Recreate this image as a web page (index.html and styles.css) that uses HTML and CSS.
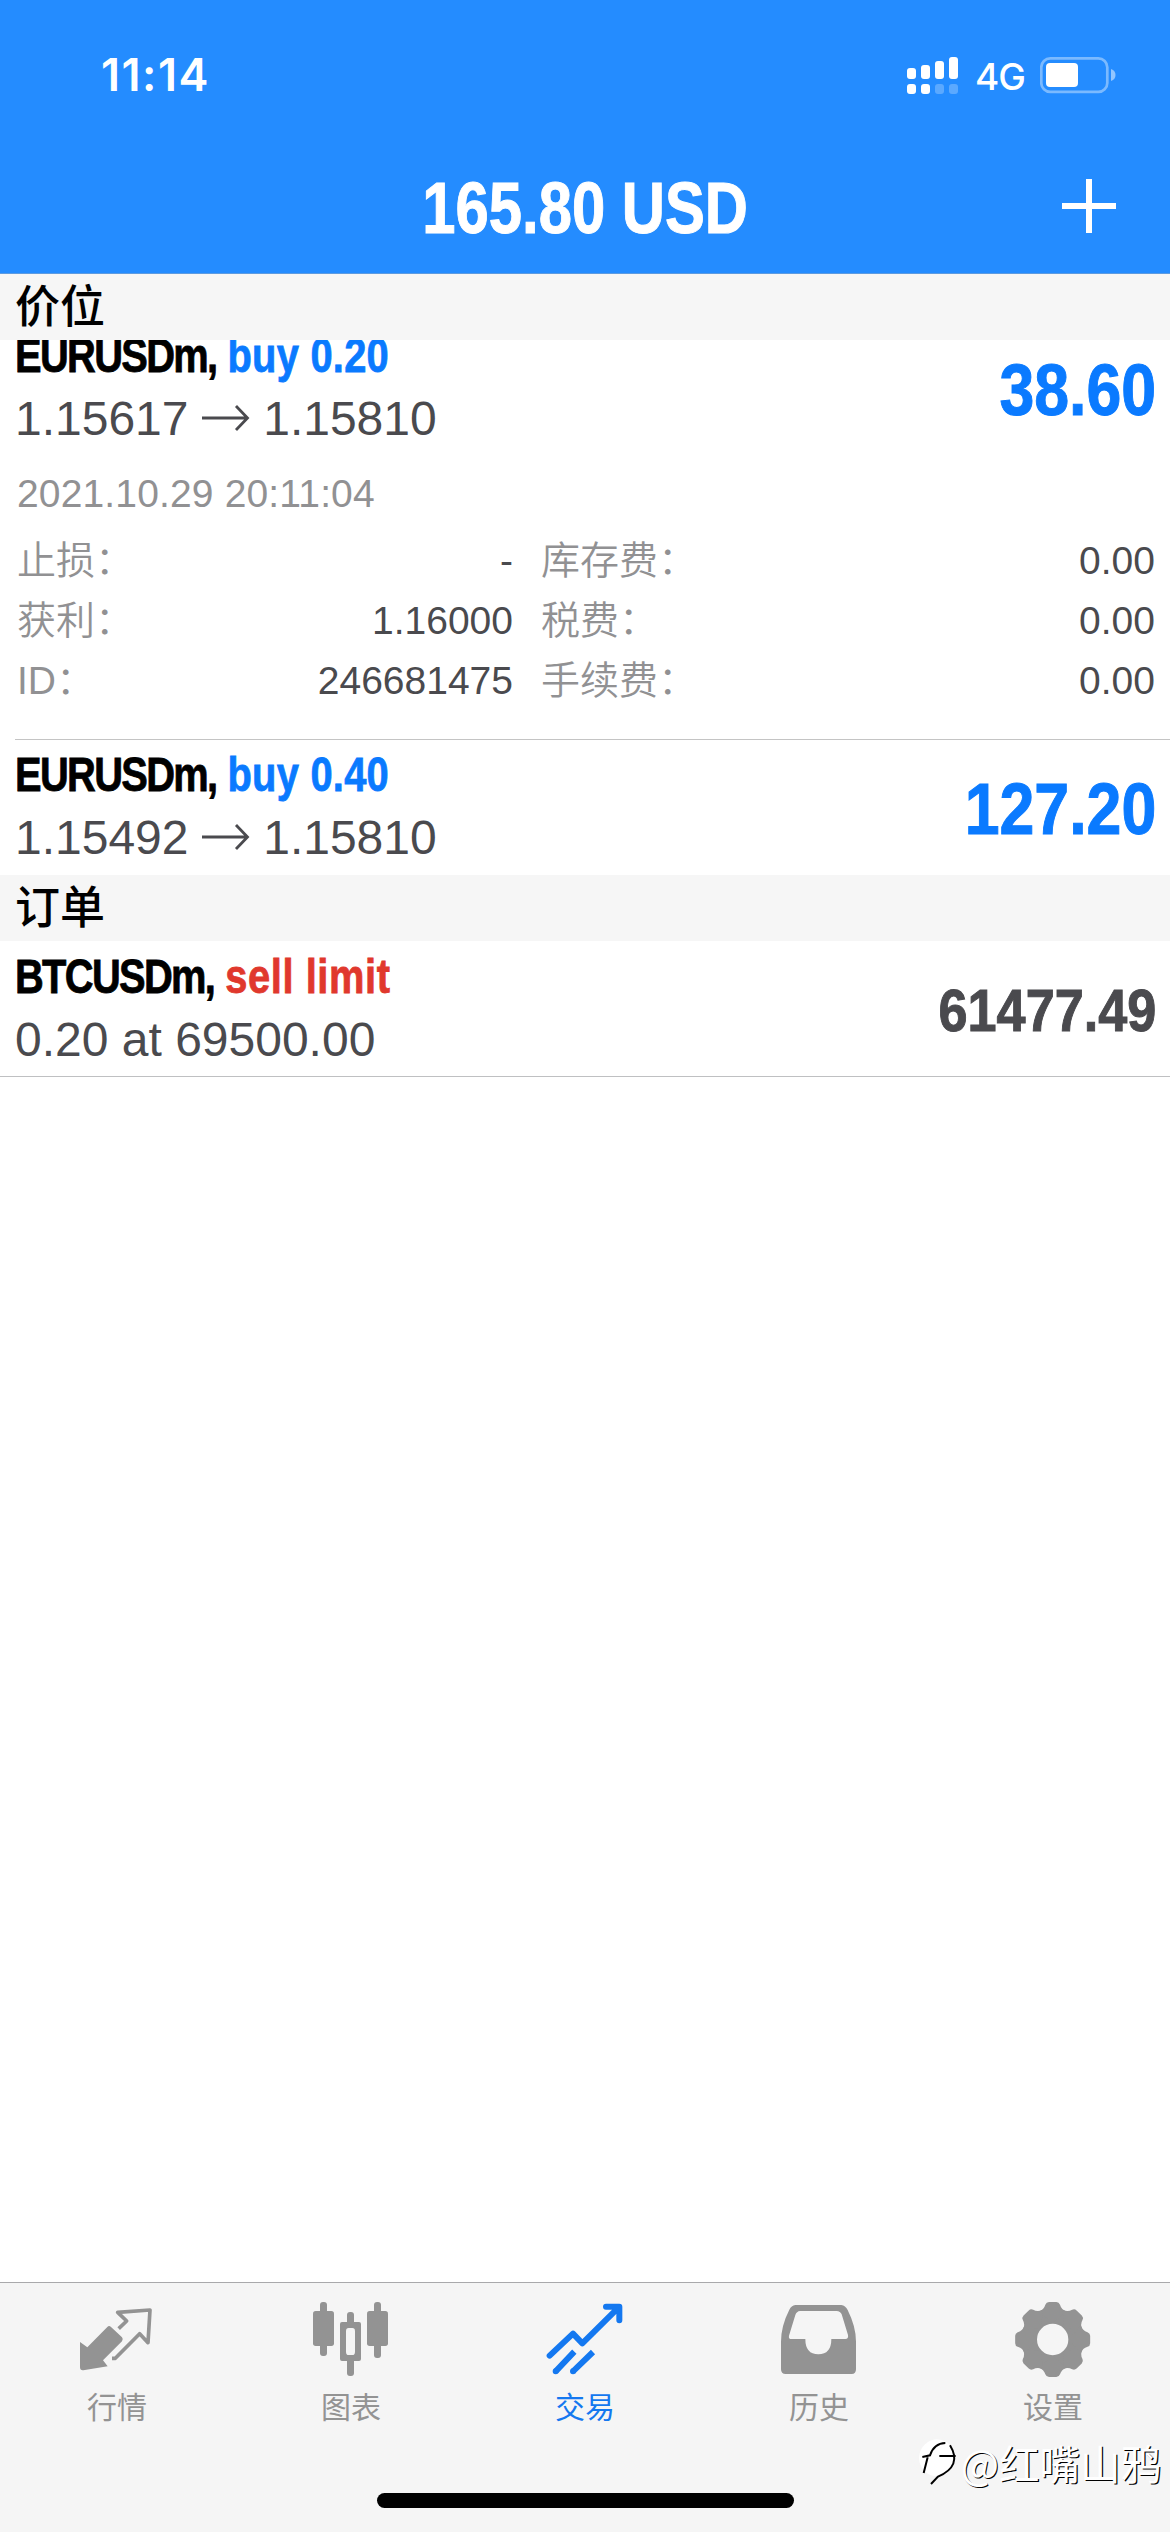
FILE: index.html
```html
<!DOCTYPE html>
<html lang="zh-CN">
<head>
<meta charset="utf-8">
<title>交易</title>
<link rel="stylesheet" href="styles.css">
</head>
<body>
<div class="app">
  <header class="header">
    <div class="status">
      <span class="clock">11:14</span>
      <svg class="status-icons" width="52" height="38" viewBox="906 55 52 38" fill="#fff">
        <rect x="907" y="67" width="9" height="11" rx="3"/><rect x="921" y="64" width="9" height="14" rx="3"/><rect x="935" y="60" width="9" height="18" rx="3"/><rect x="949" y="56" width="9" height="22" rx="3"/>
        <rect x="907" y="83" width="9" height="10" rx="3"/><rect x="921" y="83" width="9" height="10" rx="3"/>
        <g opacity=".25"><rect x="935" y="83" width="9" height="10" rx="3"/><rect x="949" y="83" width="9" height="10" rx="3"/></g>
      </svg>
      <span class="network">4G</span>
      <svg class="battery" width="76" height="38" viewBox="1040 55 76 38">
        <rect x="1041.3" y="57.3" width="66" height="33.6" rx="9" fill="none" stroke="#fff" stroke-opacity=".4" stroke-width="2.7"/>
        <rect x="1046" y="62" width="32" height="24" rx="4" fill="#fff"/>
        <path d="M1111 68q4.500 1.500 4.500 6t-4.500 6z" fill="#fff" fill-opacity=".5"/>
      </svg>
    </div>
    <div class="navbar">
      <h1 class="balance">165.80 USD</h1>
      <svg class="add" width="54" height="54" viewBox="0 0 54 54"><path d="M27 0V54M0 27H54" stroke="#fff" stroke-width="6"/></svg>
    </div>
  </header>

  <main class="content">
    <h2 class="section">价位</h2>
    <div class="clip">
      <article class="row row-scrolled">
        <div class="info">
          <div class="name"><span class="symbol">EURUSDm,</span> <span class="buy">buy 0.20</span></div>
          <div class="price">1.15617 <svg class="arrow" viewBox="0 0 48 30"><path d="M0 15H45M34 3L45.500 15L34 27" fill="none" stroke="currentColor" stroke-width="2.800"/></svg> 1.15810</div>
        </div>
        <div class="profit">38.60</div>
      </article>
      <div class="details">
        <time class="date">2021.10.29 20:11:04</time>
        <dl class="grid">
          <dt>止损：</dt><dd>-</dd><dt>库存费：</dt><dd>0.00</dd>
          <dt>获利：</dt><dd>1.16000</dd><dt>税费：</dt><dd>0.00</dd>
          <dt>ID：</dt><dd>246681475</dd><dt>手续费：</dt><dd>0.00</dd>
        </dl>
      </div>
    </div>
    <article class="row row-ruled">
      <div class="info">
        <div class="name"><span class="symbol">EURUSDm,</span> <span class="buy">buy 0.40</span></div>
        <div class="price">1.15492 <svg class="arrow" viewBox="0 0 48 30"><path d="M0 15H45M34 3L45.500 15L34 27" fill="none" stroke="currentColor" stroke-width="2.800"/></svg> 1.15810</div>
      </div>
      <div class="profit">127.20</div>
    </article>
    <h2 class="section">订单</h2>
    <article class="row row-last">
      <div class="info">
        <div class="name"><span class="symbol">BTCUSDm,</span> <span class="sell">sell limit</span></div>
        <div class="price">0.20 at 69500.00</div>
      </div>
      <div class="profit quote">61477.49</div>
    </article>
  </main>

  <nav class="tabs">
    <a class="tab">
      <svg class="icon" viewBox="225 78 252 252"><path fill="currentColor" d="M240 216L262 232L322 171Q327 165 333 171L366 202Q371 208 366 214L309 271L323 289L250 301Q240 302 240 292Z"/><path fill="none" stroke="currentColor" stroke-width="11" stroke-linejoin="round" d="M356 176L380 153L353 127L450 120L444 218L419 191L346 265H336"/></svg>
      行情
    </a>
    <a class="tab">
      <svg class="icon" viewBox="927 78 252 252" fill="currentColor"><rect x="939" y="123" width="63" height="105" rx="8"/><rect x="960" y="96" width="21" height="162" rx="9"/><rect x="1041" y="126" width="21" height="42" rx="9"/><rect x="1041" y="262" width="21" height="56" rx="9"/><path fill-rule="evenodd" d="M1026 156H1077Q1083 156 1083 162V267Q1083 273 1077 273H1026Q1020 273 1020 267V162Q1020 156 1026 156ZM1046 174Q1038 174 1038 184V245Q1038 255 1046 255H1057Q1065 255 1065 245V184Q1065 174 1057 174Z"/><rect x="1101" y="123" width="63" height="105" rx="8"/><rect x="1122" y="96" width="21" height="168" rx="9"/></svg>
      图表
    </a>
    <a class="tab active">
      <svg class="icon" viewBox="369 78 252 252" fill="none" stroke="currentColor" stroke-width="18" stroke-linejoin="round"><path stroke-linecap="round" d="M389 257L459 191L487 220L596 112M558 110H598V151"/><path d="M407 304L463 245M459 304L519 246"/><path stroke-linecap="round" d="M407 304h.1M459 304h.1"/></svg>
      交易
    </a>
    <a class="tab">
      <svg class="icon" viewBox="21 78 252 252"><path fill="currentColor" fill-rule="evenodd" d="M76 105H214Q226 106 233 120Q258 170 258 215V298Q258 312 245 312H47Q33 312 33 298V215Q33 168 58 119Q64 107 76 105ZM90 123Q80 124 76 135L57 197Q55 207 64 207H106Q106 253 145 253Q184 253 184 207H226Q236 207 234 195L215 133Q211 124 200 123Z"/></svg>
      历史
    </a>
    <a class="tab">
      <svg class="icon" viewBox="723 78 252 252" fill="currentColor"><defs><path id="tooth" d="M806 124Q822 119 826 104Q829 96 837 96H859Q867 96 870 104Q874 119 890 124L848 160Z"/></defs><circle cx="848" cy="208.500" r="70" fill="none" stroke="currentColor" stroke-width="46"/><use href="#tooth"/><use href="#tooth" transform="rotate(45 848 208.500)"/><use href="#tooth" transform="rotate(90 848 208.500)"/><use href="#tooth" transform="rotate(135 848 208.500)"/><use href="#tooth" transform="rotate(180 848 208.500)"/><use href="#tooth" transform="rotate(225 848 208.500)"/><use href="#tooth" transform="rotate(270 848 208.500)"/><use href="#tooth" transform="rotate(315 848 208.500)"/></svg>
      设置
    </a>
  </nav>
  <div class="home-indicator"></div>
  <div class="watermark">
    <svg width="44" height="50" viewBox="426 526 132 150"><path fill="#fff" d="M487 530a58 55 0 1 1-16 108a56 56 0 0 1 16-108z"/><path fill="none" stroke="#000" stroke-width="6" d="M445 583L468 578Q480 542 514 541M461 584L449 631M496 580H545M528 548Q566 610 492 642L471 664"/></svg>
    <span>@红嘴山鸦</span>
  </div>
</div>
</body>
</html>
```

FILE: styles.css
```css
* { box-sizing: border-box; }

body {
  margin: 0;
  background: #fff;
  font-family: "Liberation Sans", "Noto Sans CJK SC", sans-serif;
}

h1, h2, dl, dd { margin: 0; }

.app {
  position: relative;
  display: flex;
  flex-direction: column;
  width: 1170px;
  height: 2532px;
  overflow: hidden;
}

/* Header */
.header {
  height: 274px;
  flex: none;
  background: #248cff;
  color: #fff;
  border-bottom: 1px solid #5d9be0;
}

.status {
  display: flex;
  align-items: center;
  height: 149px;
  padding: 0 54px 0 101px;
  font-family: Inter, sans-serif;
}

.clock {
  font-size: 45px;
  font-weight: 600;
  letter-spacing: 1.5px;
  margin-right: auto;
}

.network {
  width: 50px;
  margin: 4px 15px 0 17px;
  font-size: 37px;
  font-weight: 500;
  letter-spacing: -1px;
  line-height: 40px;
}

.navbar {
  position: relative;
  display: flex;
  justify-content: center;
  height: 124px;
  padding-top: 19px;
}

.balance {
  font-size: 72px;
  line-height: 80px;
  transform: scaleX(0.83);
  -webkit-text-stroke: 1px currentColor;
  white-space: nowrap;
}

.add {
  position: absolute;
  right: 54px;
  top: 30px;
}

/* Lists */
.content { flex: 1; }

.section {
  height: 66px;
  padding-left: 15px;
  background: #f6f6f6;
  font-size: 45px;
  font-weight: 500;
  line-height: 68px;
}

.clip {
  height: 399px;
  overflow: hidden;
}

.row {
  display: flex;
  justify-content: space-between;
  height: 136px;
  padding: 8px 14px 0 15px;
}

.row-scrolled { margin-top: -20px; }

.row-ruled {
  background: linear-gradient(#c4c4c4, #c4c4c4) 15px 0 / 100% 1px no-repeat;
}

.row-last { border-bottom: 1px solid #bfc0c2; }

.name {
  font-size: 48px;
  font-weight: 700;
  line-height: 56px;
  transform: scaleX(0.83);
  transform-origin: left;
  -webkit-text-stroke: 0.8px currentColor;
  white-space: nowrap;
}

.symbol { letter-spacing: -2px; }
.buy { color: #0a7aff; letter-spacing: 0.3px; }
.sell { color: #e0382d; letter-spacing: 0.7px; }

.price {
  color: #4a4a4e;
  font-size: 48px;
  line-height: 56px;
  margin-top: 7px;
  white-space: nowrap;
}

.arrow {
  width: 48px;
  height: 30px;
  vertical-align: 2px;
}

.profit {
  margin-top: 22px;
  color: #0a7aff;
  font-size: 72px;
  font-weight: 700;
  line-height: 80px;
  transform: scaleX(0.87);
  transform-origin: right;
  -webkit-text-stroke: 1px currentColor;
}

.quote {
  color: #4a4a4e;
  font-size: 60px;
}

.details { padding: 0 15px 0 17px; }

.date {
  display: block;
  margin-top: 16px;
  color: #919193;
  font-size: 39px;
  letter-spacing: 0.15px;
  line-height: 44px;
}

.grid {
  display: grid;
  grid-template-columns: 170px 326px 1fr 1fr;
  grid-auto-rows: 60px;
  margin-top: 15px;
  font-size: 39px;
  line-height: 60px;
}

.grid dt {
  color: #919193;
  font-weight: 350;
  white-space: nowrap;
}

.grid dt:nth-of-type(even) { padding-left: 28px; }

.grid dd {
  color: #4a4a4e;
  text-align: right;
}

/* Tab bar */
.tabs {
  display: grid;
  grid-template-columns: repeat(5, 1fr);
  height: 250px;
  flex: none;
  padding-top: 13px;
  background: #f5f5f5;
  border-top: 1px solid #a9a9ab;
}

.tab {
  display: flex;
  flex-direction: column;
  align-items: center;
  color: #939393;
  font-size: 30px;
  line-height: 44px;
}

.icon {
  width: 84px;
  height: 84px;
  margin-bottom: 6px;
}

.active { color: #1478f0; }

.home-indicator {
  position: absolute;
  left: 377px;
  bottom: 24px;
  width: 417px;
  height: 15px;
  border-radius: 8px;
  background: #000;
}

.watermark {
  position: absolute;
  right: 9px;
  bottom: 41px;
  display: flex;
  align-items: center;
  gap: 1px;
  color: #fff;
  font-family: "Noto Sans CJK SC", sans-serif;
  font-size: 40.5px;
  line-height: 56px;
  text-shadow: 1.2px 1.2px 0 #000;
}
```
